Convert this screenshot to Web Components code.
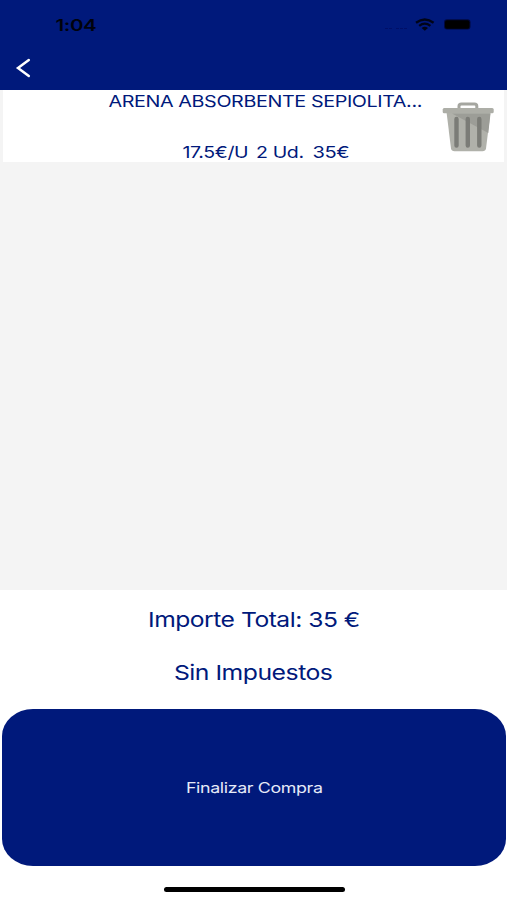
<!DOCTYPE html>
<html lang="es">
<head>
<meta charset="utf-8">
<title>Carrito</title>
<style>
html, body { margin: 0; height: 100%; background: #fff; overflow: hidden; }
</style>
</head>
<body>
<cart-screen></cart-screen>
<script>
function mount(el, html) {
  el.attachShadow({ mode: 'open' }).innerHTML = html;
}

// One line of wide text, stretched to the ink width given by "span".
class WideText extends HTMLElement {
  connectedCallback() {
    if (this.shadowRoot) return;
    mount(this, `<style>
      :host { display: flex; justify-content: center; width: var(--w); line-height: var(--lh, 24px); white-space: pre; letter-spacing: -0.02em; }
      span { display: block; flex: none; transform-origin: center; }
    </style><span><slot></slot></span>`);
    const target = Number(this.getAttribute('span'));
    this.style.setProperty('--w', target + 'px');
    const s = this.shadowRoot.querySelector('span');
    s.style.transform = `scaleX(${target / s.offsetWidth})`;
  }
}

class StatusBar extends HTMLElement {
  connectedCallback() {
    mount(this, `<style>
      :host { display: flex; justify-content: space-between; height: 50px; padding: 0 35px 0 55px; color: #00020c; font-size: 16px; font-weight: 600; align-items: center; box-sizing: border-box; }
      svg { display: block; }
    </style>
    <wide-text span="41">1:04</wide-text>
    <svg width="88" height="20" viewBox="384 15 88 20">
      <path d="M385 28.500h8M396 28.500h11" stroke="#000f68" stroke-width="1" stroke-dasharray="3 1"/>
      <g fill="none" stroke="#000417" stroke-width="2.300">
        <path d="M416 22.700Q424.800 16.200 433.600 22.700"/>
        <path d="M419.200 25.800Q424.800 21.500 430.400 25.800"/>
      </g>
      <path d="M424.800 30.800L421.600 28Q424.800 25.700 428 28Z" fill="#000417"/>
      <rect x="444" y="19.200" width="26.500" height="10.400" rx="3" fill="#00083f"/>
      <rect x="445" y="20.300" width="24.500" height="8.400" rx="2" fill="#000"/>
    </svg>`);
  }
}

class NavBar extends HTMLElement {
  connectedCallback() {
    mount(this, `<style>
      :host { display: flex; height: 39.500px; padding-left: 15px; align-items: flex-start; box-sizing: border-box; }
      svg { display: block; margin-top: 6px; }
    </style>
    <svg width="18" height="24" viewBox="15 56 18 24"><path d="M28.800 60L18 68L28.800 76" fill="none" stroke="#fff" stroke-width="2.500" stroke-linecap="round" stroke-linejoin="miter"/></svg>`);
  }
}

class TrashIcon extends HTMLElement {
  connectedCallback() {
    mount(this, `<style>:host { display: block; } svg { display: block; }</style>
    <svg width="52" height="52" viewBox="442 101 52 52">
      <path d="M459 109V106Q459 104 461.500 104H474.500Q476.800 104 476.800 106V109" fill="none" stroke="#a5a6a0" stroke-width="3"/>
      <path d="M446.500 112H490.500L486 148.500Q485.500 151.200 482.500 151.200H454.500Q451.500 151.200 451 148.500Z" fill="#b0b1aa"/>
      <path d="M452 113.500L488.300 133L490.500 113.500Z" fill="#9c9d97"/>
      <rect x="442.700" y="108" width="51" height="5.300" rx="1.500" fill="#adaea7"/>
      <path d="M456.500 119V145.500M467.800 119V145.500M479.300 119V145.500" stroke="#7b7c77" stroke-width="4.400" stroke-linecap="round"/>
    </svg>`);
  }
}

class CartItem extends HTMLElement {
  connectedCallback() {
    mount(this, `<style>
      :host { display: grid; grid-template-columns: 439px 1fr; height: 72px; margin: 0 3px; background: #fff; color: #00197b; font-size: 16.300px; }
      .info { display: flex; flex-direction: column; gap: 27px; padding-left: 106px; margin-top: -0.500px; --lh: 24px; }
      .row { display: flex; gap: 8px; padding-left: 73px; }
      trash-icon { margin-top: 11.500px; }
    </style>
    <div class="info">
      <slot name="title"></slot>
      <div class="row"><slot></slot></div>
    </div>
    <trash-icon></trash-icon>`);
  }
}

class CartTotals extends HTMLElement {
  connectedCallback() {
    mount(this, `<style>
      :host { display: flex; flex-direction: column; align-items: center; gap: 23.500px; padding-top: 15.300px; height: 119.500px; box-sizing: border-box; color: #00197b; font-size: 20.700px; --lh: 30px; }
    </style><slot></slot>`);
  }
}

class BuyButton extends HTMLElement {
  connectedCallback() {
    mount(this, `<style>
      :host { display: block; padding: 0 1.500px 0 2px; }
      button { display: flex; width: 100%; height: 157px; border: 0; margin: 0; padding: 1px 0 0; align-items: center; justify-content: center; background: #00197b; color: #e6ebf8; border-radius: 31px / 27px; font: inherit; font-size: 14.400px; }
    </style><button><slot></slot></button>`);
  }
}

class HomeIndicator extends HTMLElement {
  connectedCallback() {
    mount(this, `<style>
      :host { display: flex; justify-content: center; padding: 21px 0 0 1px; }
      i { display: block; width: 181px; height: 5px; border-radius: 3px; background: #000; }
    </style><i></i>`);
  }
}

class CartScreen extends HTMLElement {
  connectedCallback() {
    mount(this, `<style>
      :host { display: flex; flex-direction: column; width: 507px; height: 900px; background: #fff; font-family: Inter, "Liberation Sans", sans-serif; }
      header { background: #00197b; height: 89.500px; }
      main { background: #f4f4f4; height: 500px; }
    </style>
    <header><status-bar></status-bar><nav-bar></nav-bar></header>
    <main>
      <cart-item>
        <wide-text slot="title" span="313">ARENA ABSORBENTE SEPIOLITA...</wide-text>
        <wide-text span="66">17.5€/U</wide-text><wide-text span="48">2 Ud.</wide-text><wide-text span="37">35€</wide-text>
      </cart-item>
    </main>
    <cart-totals>
      <wide-text span="212">Importe Total: 35 €</wide-text>
      <wide-text span="158">Sin Impuestos</wide-text>
    </cart-totals>
    <buy-button><wide-text span="136">Finalizar Compra</wide-text></buy-button>
    <home-indicator></home-indicator>`);
  }
}

customElements.define('wide-text', WideText);
customElements.define('status-bar', StatusBar);
customElements.define('nav-bar', NavBar);
customElements.define('trash-icon', TrashIcon);
customElements.define('cart-item', CartItem);
customElements.define('cart-totals', CartTotals);
customElements.define('buy-button', BuyButton);
customElements.define('home-indicator', HomeIndicator);
customElements.define('cart-screen', CartScreen);
</script>
</body>
</html>
